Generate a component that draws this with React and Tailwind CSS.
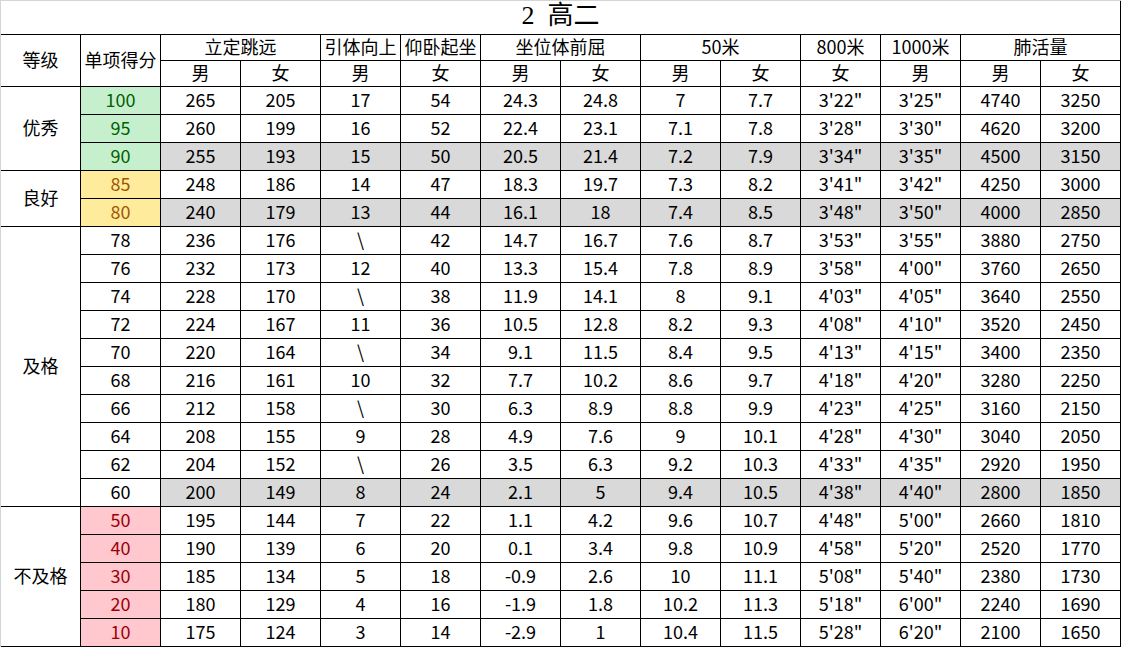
import React from "react";

const scores = [100, 95, 90, 85, 80, 78, 76, 74, 72, 70, 68, 66, 64, 62, 60, 50, 40, 30, 20, 10];

const cols = [
  [265, 260, 255, 248, 240, 236, 232, 228, 224, 220, 216, 212, 208, 204, 200, 195, 190, 185, 180, 175],
  [205, 199, 193, 186, 179, 176, 173, 170, 167, 164, 161, 158, 155, 152, 149, 144, 139, 134, 129, 124],
  [17, 16, 15, 14, 13, "\\", 12, "\\", 11, "\\", 10, "\\", 9, "\\", 8, 7, 6, 5, 4, 3],
  [54, 52, 50, 47, 44, 42, 40, 38, 36, 34, 32, 30, 28, 26, 24, 22, 20, 18, 16, 14],
  ["24.3", "22.4", "20.5", "18.3", "16.1", "14.7", "13.3", "11.9", "10.5", "9.1", "7.7", "6.3", "4.9", "3.5", "2.1", "1.1", "0.1", "-0.9", "-1.9", "-2.9"],
  ["24.8", "23.1", "21.4", "19.7", "18", "16.7", "15.4", "14.1", "12.8", "11.5", "10.2", "8.9", "7.6", "6.3", "5", "4.2", "3.4", "2.6", "1.8", "1"],
  ["7", "7.1", "7.2", "7.3", "7.4", "7.6", "7.8", "8", "8.2", "8.4", "8.6", "8.8", "9", "9.2", "9.4", "9.6", "9.8", "10", "10.2", "10.4"],
  ["7.7", "7.8", "7.9", "8.2", "8.5", "8.7", "8.9", "9.1", "9.3", "9.5", "9.7", "9.9", "10.1", "10.3", "10.5", "10.7", "10.9", "11.1", "11.3", "11.5"],
  ["3'22\"", "3'28\"", "3'34\"", "3'41\"", "3'48\"", "3'53\"", "3'58\"", "4'03\"", "4'08\"", "4'13\"", "4'18\"", "4'23\"", "4'28\"", "4'33\"", "4'38\"", "4'48\"", "4'58\"", "5'08\"", "5'18\"", "5'28\""],
  ["3'25\"", "3'30\"", "3'35\"", "3'42\"", "3'50\"", "3'55\"", "4'00\"", "4'05\"", "4'10\"", "4'15\"", "4'20\"", "4'25\"", "4'30\"", "4'35\"", "4'40\"", "5'00\"", "5'20\"", "5'40\"", "6'00\"", "6'20\""],
  [4740, 4620, 4500, 4250, 4000, 3880, 3760, 3640, 3520, 3400, 3280, 3160, 3040, 2920, 2800, 2660, 2520, 2380, 2240, 2100],
  [3250, 3200, 3150, 3000, 2850, 2750, 2650, 2550, 2450, 2350, 2250, 2150, 2050, 1950, 1850, 1810, 1770, 1730, 1690, 1650],
];

const grades = [
  { name: "优秀", span: "row-span-3" },
  { name: "良好", span: "row-span-2" },
  { name: "及格", span: "row-span-10" },
  { name: "不及格", span: "row-span-5" },
];

const grayRows = [2, 4, 14];

function scoreStyle(s) {
  if (s >= 90) return "bg-[#c6efce] text-[#006100]";
  if (s >= 80) return "bg-[#ffeb9c] text-[#9c5700]";
  if (s < 60) return "bg-[#ffc7ce] text-[#9c0006]";
  return "bg-white text-black";
}

const cell = "flex items-center justify-center pb-1 border-r border-b border-black";

export default function App() {
  const rows = [];
  const gradeStarts = { 0: 0, 3: 1, 5: 2, 15: 3 };

  scores.forEach((s, i) => {
    if (gradeStarts[i] !== undefined) {
      const gr = grades[gradeStarts[i]];
      rows.push(
        <div key={"g" + i} className={`${cell} ${gr.span} bg-white`}>
          {gr.name}
        </div>
      );
    }
    rows.push(
      <div key={"s" + i} className={`${cell} ${scoreStyle(s)}`}>
        {s}
      </div>
    );
    const gray = grayRows.includes(i);
    cols.forEach((c, j) => {
      rows.push(
        <div key={`c${i}-${j}`} className={`${cell} ${gray ? "bg-[#d9d9d9]" : "bg-white"}`}>
          {c[i]}
        </div>
      );
    });
  });

  return (
    <div className="w-[1121px] h-[647px] bg-white overflow-hidden">
      <div
        className="grid grid-cols-[repeat(14,80px)] grid-rows-[34px_26px_26px_repeat(20,28px)] border-l border-t border-[#d4d4d4] text-[18px] leading-none text-black"
        style={{ fontFamily: '"Noto Sans CJK SC", "Noto Sans", sans-serif' }}
      >
        <div
          className="col-span-14 flex items-center justify-center pb-1 border-r border-b border-r-black border-b-black text-[26px]"
          style={{ fontFamily: '"Liberation Serif", "Noto Sans CJK SC", serif' }}
        >
          2&nbsp;&nbsp;高二
        </div>

        <div className={`${cell} row-span-2`}>等级</div>
        <div className={`${cell} row-span-2`}>单项得分</div>
        <div className={`${cell} col-span-2`}>立定跳远</div>
        <div className={cell}>引体向上</div>
        <div className={cell}>仰卧起坐</div>
        <div className={`${cell} col-span-2`}>坐位体前屈</div>
        <div className={`${cell} col-span-2`}>50米</div>
        <div className={cell}>800米</div>
        <div className={cell}>1000米</div>
        <div className={`${cell} col-span-2`}>肺活量</div>

        {["男", "女", "男", "女", "男", "女", "男", "女", "女", "男", "男", "女"].map((t, i) => (
          <div key={"h" + i} className={cell}>
            {t}
          </div>
        ))}

        {rows}
      </div>
    </div>
  );
}
